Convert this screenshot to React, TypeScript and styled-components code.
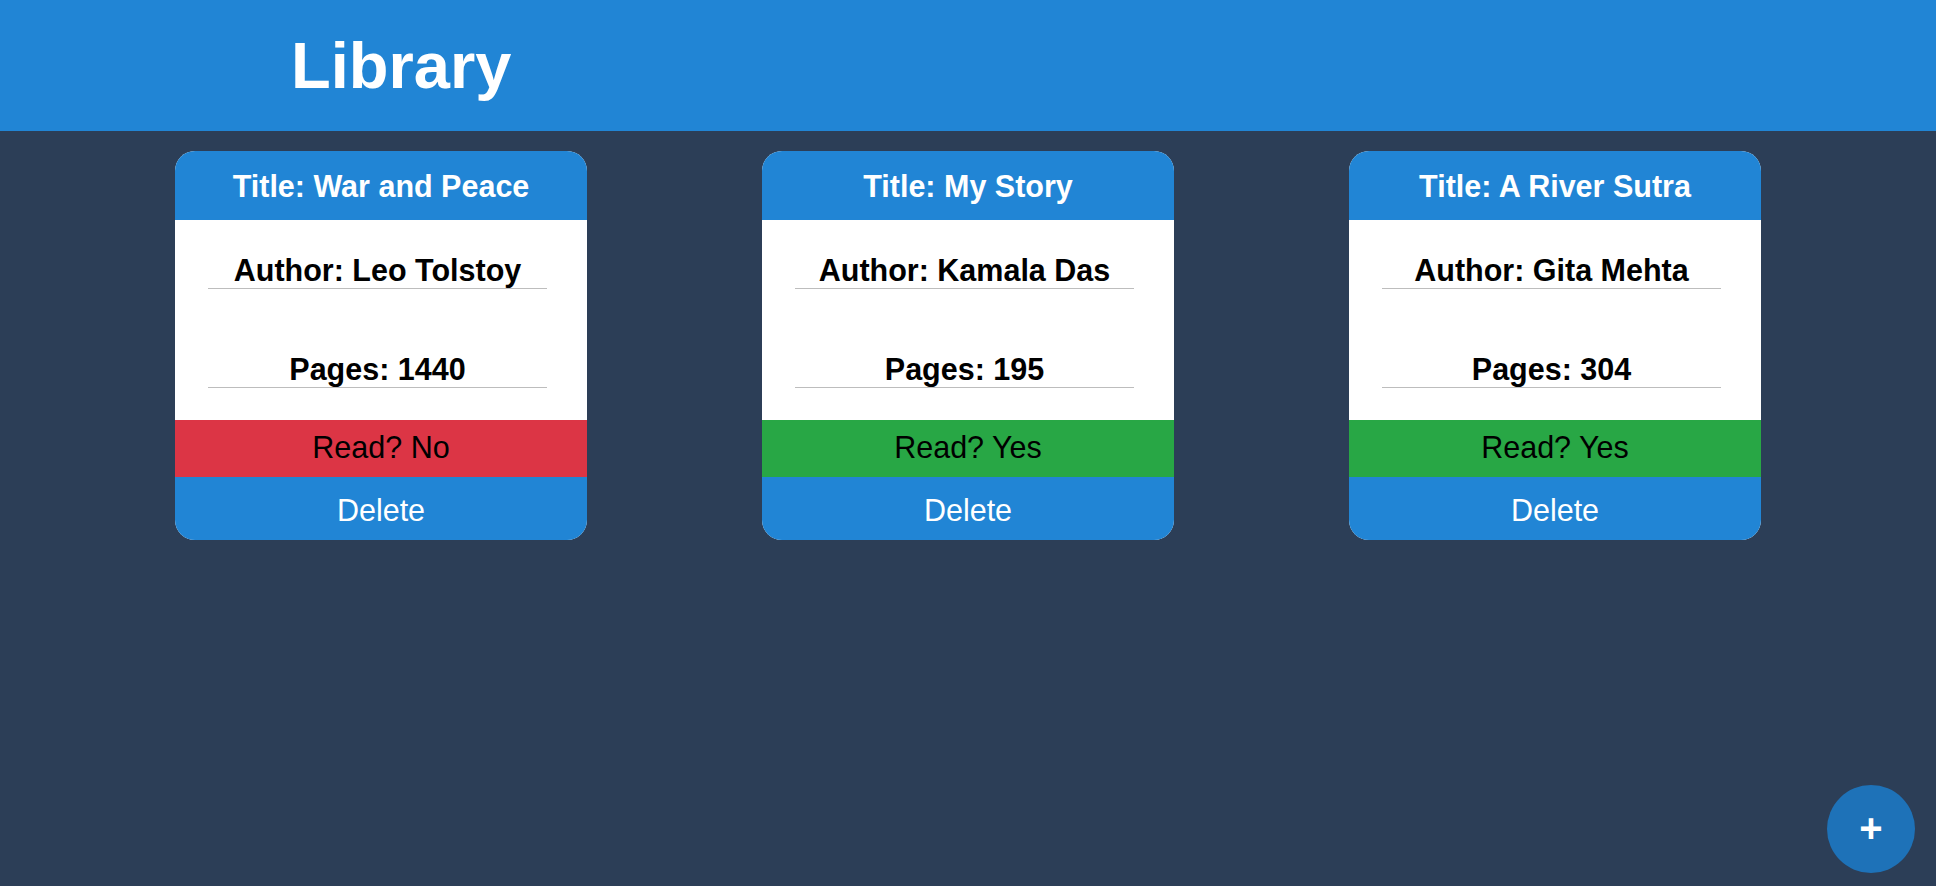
import React from "react";
import styled, { createGlobalStyle } from "styled-components";

const GlobalStyle = createGlobalStyle`
  html, body {
    margin: 0;
    padding: 0;
    background: #2c3e57;
    font-family: "Liberation Sans", Arial, Helvetica, sans-serif;
  }
  body {
    min-height: 100vh;
  }
  * { box-sizing: border-box; }
`;

const Page = styled.div`
  min-height: 100vh;
  background: #2c3e57;
`;

const Header = styled.header`
  height: 131px;
  background: #2185d5;
  display: flex;
  align-items: center;
  padding-left: 291px;
`;

const Heading = styled.h1`
  margin: 0;
  color: #ffffff;
  font-size: 65px;
  font-weight: 700;
  line-height: 1.15;
  padding-top: 2px;
`;

const Shelf = styled.main`
  display: flex;
  justify-content: space-evenly;
  align-items: flex-start;
  padding-top: 20px;
`;

const Card = styled.article`
  width: 412px;
  border-radius: 20px;
  overflow: hidden;
  background: #ffffff;
  display: flex;
  flex-direction: column;
  font-size: 30.5px;
  line-height: 36px;
  text-align: center;
`;

const CardTitle = styled.h2`
  margin: 0;
  padding: 17px 8px 16px;
  background: #2185d5;
  color: #ffffff;
  font-size: 30.5px;
  line-height: 36px;
  font-weight: 700;
`;

const CardBody = styled.div`
  display: flex;
  flex-direction: column;
  gap: 60px;
  padding: 30px 40px 32px 33px;
`;

const Field = styled.p`
  margin: 0;
  padding-top: 2px;
  color: #000000;
  font-weight: 700;
  border-bottom: 1px solid #bdbdbd;
`;

const ReadToggle = styled.button<{ $read: boolean }>`
  border: none;
  margin: 0;
  padding: 9px 0 12px;
  font-family: inherit;
  font-size: 30.5px;
  line-height: 36px;
  color: #000000;
  background: ${(p) => (p.$read ? "#28a745" : "#dc3545")};
  cursor: pointer;
`;

const DeleteButton = styled.button`
  border: none;
  margin: 0;
  padding: 15px 0 12px;
  font-family: inherit;
  font-size: 30.5px;
  line-height: 36px;
  color: #ffffff;
  background: #2185d5;
  cursor: pointer;
`;

const AddButton = styled.button`
  position: fixed;
  right: 21px;
  bottom: 13px;
  width: 88px;
  height: 88px;
  border-radius: 50%;
  border: none;
  background: #1e72b8;
  color: #ffffff;
  font-family: inherit;
  font-size: 40px;
  font-weight: 700;
  line-height: 1;
  display: flex;
  align-items: center;
  justify-content: center;
  padding: 0 0 3px;
  cursor: pointer;
`;

type Book = { title: string; author: string; pages: number; read: boolean };

const books: Book[] = [
  { title: "War and Peace", author: "Leo Tolstoy", pages: 1440, read: false },
  { title: "My Story", author: "Kamala Das", pages: 195, read: true },
  { title: "A River Sutra", author: "Gita Mehta", pages: 304, read: true },
];

export default function App() {
  return (
    <Page>
      <GlobalStyle />
      <Header>
        <Heading>Library</Heading>
      </Header>
      <Shelf>
        {books.map((b) => (
          <Card key={b.title}>
            <CardTitle>Title: {b.title}</CardTitle>
            <CardBody>
              <Field>Author: {b.author}</Field>
              <Field>Pages: {b.pages}</Field>
            </CardBody>
            <ReadToggle $read={b.read}>Read? {b.read ? "Yes" : "No"}</ReadToggle>
            <DeleteButton>Delete</DeleteButton>
          </Card>
        ))}
      </Shelf>
      <AddButton aria-label="Add book">+</AddButton>
    </Page>
  );
}
